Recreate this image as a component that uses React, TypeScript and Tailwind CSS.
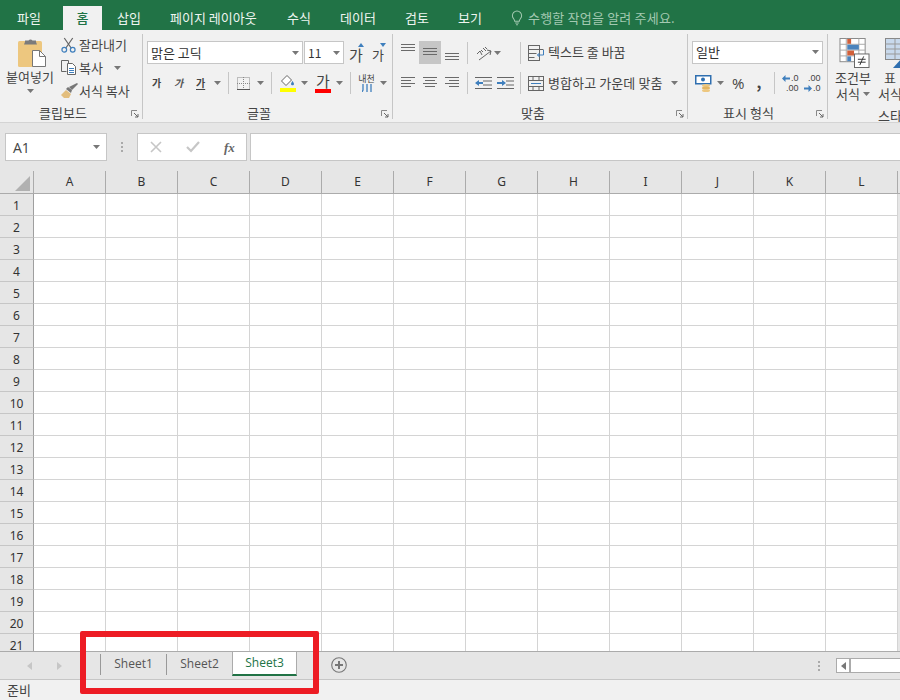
import React from "react";

const KR = "font-['Noto_Sans_CJK_KR','Noto_Sans',sans-serif]";
const tabs: [string, string][] = [
  ["파일", "w-[63px] pl-[17px]"],
  ["홈", "w-[39px]"],
  ["삽입", "w-[53px] pl-[15px]"],
  ["페이지 레이아웃", "w-[117px] pl-[15px]"],
  ["수식", "w-[53px] pl-[15px]"],
  ["데이터", "w-[65px] pl-[15px]"],
  ["검토", "w-[53px] pl-[15px]"],
  ["보기", "w-[53px] pl-[15px]"],
];
const cols = "ABCDEFGHIJKL".split("");
const rows = Array.from({ length: 21 }, (_, i) => i + 1);

function Caret({ className = "" }: { className?: string }) {
  return (
    <svg width="7" height="4" viewBox="0 0 7 4" className={`shrink-0 ${className}`}>
      <path d="M0 0h7L3.500 4z" fill="#777" />
    </svg>
  );
}
function Launcher() {
  return (
    <svg width="8" height="8" viewBox="0 0 8 8" className="shrink-0">
      <path d="M.5 6V.5H6" stroke="#888" fill="none" />
      <path d="M3 3l4 4M7 4v3H4" stroke="#666" fill="none" />
    </svg>
  );
}
function Sep({ className = "" }: { className?: string }) {
  return <div className={`w-px h-[22px] bg-[#c6c6c6] shrink-0 ${className}`} />;
}
function Group({ label, width, labelPl = "", children }: { label: string; width: string; labelPl?: string; children: React.ReactNode }) {
  return (
    <div className={`${width} shrink-0 h-[85px] border-r border-[#c6c6c6] flex flex-col relative`}>
      <div className="h-[72px]">{children}</div>
      <div className={`flex-1 flex items-center justify-center text-[13px] leading-none text-[#444] ${labelPl}`}>{label}</div>
      <div className="absolute right-[3px] bottom-[1px]">
        <Launcher />
      </div>
    </div>
  );
}
function Lines({ ws, h = 13 }: { ws: [number, number][]; h?: number }) {
  return (
    <svg width="14" height={h} viewBox={`0 0 14 ${h}`} className="block">
      {ws.map(([x, w], i) => (
        <rect key={i} x={x} y={i * 3} width={w} height="1" fill="#6a6a6a" />
      ))}
    </svg>
  );
}
function Combo({ text, w, size = "text-[13px]", cls = "" }: { text: string; w: string; size?: string; cls?: string }) {
  return (
    <div className={`${w} h-[23px] bg-white border border-[#c6c6c6] flex items-center justify-between pl-[3px] pr-[3px] ${size} text-[#333] shrink-0 ${cls}`}>
      <span className="leading-none">{text}</span>
      <Caret />
    </div>
  );
}
function Dots({ className = "" }: { className?: string }) {
  return (
    <div className={`flex flex-col gap-[2px] ${className}`}>
      <div className="w-[2px] h-[2px] bg-[#aaa]" />
      <div className="w-[2px] h-[2px] bg-[#aaa]" />
      <div className="w-[2px] h-[2px] bg-[#aaa]" />
    </div>
  );
}
function Arrow({ flip = false }: { flip?: boolean }) {
  return (
    <svg width="8" height="7" viewBox="0 0 8 7" className="shrink-0" style={flip ? { transform: "scaleX(-1)" } : undefined}>
      <path d="M0 3.500L3.500 0v2.500H8v2H3.500V7z" fill="#3f7fbd" />
    </svg>
  );
}

export default function App() {
  return (
    <div className={`relative w-[900px] h-[700px] overflow-hidden flex flex-col bg-[#e6e6e6] ${KR}`}>
      {/* Title tabs */}
      <div className="h-[30px] bg-[#217346] flex items-end shrink-0 text-[13px] text-white">
        {tabs.map(([t, c], i) =>
          i === 1 ? (
            <div key={t} className={`${c} h-[24px] bg-[#f1f1f1] text-[#217346] flex items-center justify-center font-medium`}>{t}</div>
          ) : (
            <div key={t} className={`${c} h-[24px] flex items-center whitespace-nowrap text-[#eef5f0]`}>{t}</div>
          )
        )}
        <div className="h-[24px] flex items-center gap-[5px] text-[#a3c9b1] ml-[15px]">
          <svg width="12" height="16" viewBox="0 0 13 16" fill="none" stroke="#a3c9b1" strokeWidth="1.100">
            <path d="M4 11.500C4 9 1.500 8.500 1.500 5.500a5 5 0 0 1 10 0C11.500 8.500 9 9 9 11.500z" />
            <path d="M4.500 13.500h4M5.500 15.300h2" />
          </svg>
          <span className="tracking-[0.2px] whitespace-nowrap">수행할 작업을 알려 주세요.</span>
        </div>
      </div>

      {/* Ribbon */}
      <div className="h-[93px] bg-[#f1f1f1] border-b border-[#d4d4d4] flex shrink-0 pt-[4px] text-[#444] text-[13px] overflow-hidden">
        <Group label="클립보드" width="w-[143px]" labelPl="pr-[16px]">
          <div className="flex">
            <div className="w-[60px] flex flex-col items-center">
              <svg width="28" height="29" viewBox="0 0 28 29" className="ml-[4px] mt-[4px]">
                <rect x="0" y="3" width="24" height="26" rx="1.500" fill="#edc77f" />
                <path d="M7 4V2.500h3.500a2.500 2.500 0 0 1 4 0H18V4l1 2.500H6z" fill="#7b7b7b" />
                <path d="M14.500 12.500h7l6 6v10h-13z" fill="#fff" stroke="#777" />
                <path d="M21.500 12.500v6h6" fill="none" stroke="#777" />
              </svg>
              <span className="leading-none mt-[3px] whitespace-nowrap">붙여넣기</span>
              <Caret className="mt-[6px]" />
            </div>
            <div className="flex flex-col mt-[-1px]">
              {[
                ["잘라내기", "cut"],
                ["복사", "copy"],
                ["서식 복사", "brush"],
              ].map(([t, k]) => (
                <div key={t} className="h-[23px] flex items-center whitespace-nowrap">
                  <div className="w-[19px] shrink-0 pl-px">
                    {k === "cut" && (
                      <svg width="15" height="16" viewBox="0 0 16 17" fill="none" className="block">
                        <path d="M3.500 1l7.500 11M12.500 1L5 12" stroke="#666" strokeWidth="1.300" />
                        <circle cx="3.500" cy="13.500" r="2.500" stroke="#3f7fbd" strokeWidth="1.300" />
                        <circle cx="12.500" cy="13.500" r="2.500" stroke="#3f7fbd" strokeWidth="1.300" />
                      </svg>
                    )}
                    {k === "copy" && (
                      <svg width="16" height="15" viewBox="0 0 16 15" fill="none" stroke="#666" className="block">
                        <path d="M5.500 11.500h-5v-11h7v3" />
                        <path d="M6.500 3.500h5l3 3v8h-8z" fill="#fff" />
                        <path d="M8 8.500h5M8 10.500h5M8 12.500h5" stroke="#3f7fbd" />
                      </svg>
                    )}
                    {k === "brush" && (
                      <svg width="18" height="15" viewBox="0 0 18 15" className="block">
                        <path d="M0 12l5-5 5 4-2 4H3z" fill="#e3be7d" />
                        <path d="M5 6l2-2 4 3-1 3z" fill="#777" />
                        <path d="M8 4l8-4 1 1-6 6z" fill="#777" />
                      </svg>
                    )}
                  </div>
                  <span className="leading-none">{t}</span>
                  {k === "copy" && <Caret className="ml-[11px]" />}
                </div>
              ))}
            </div>
          </div>
        </Group>

        <Group label="글꼴" width="w-[250px]" labelPl="pr-[17px]">
          <div className="flex items-center pl-[4px] pt-[7px]">
            <Combo text="맑은 고딕" w="w-[156px]" />
            <Combo text="11" w="w-[40px]" size="text-[12px]" cls="ml-[1px]" />
            <div className="ml-[4px] w-[22px] relative text-[15px] leading-none pt-[3px] pl-px">
              가
              <svg width="6" height="4" viewBox="0 0 6 4" className="absolute left-[10px] top-[-1px]"><path d="M3 0l3 4H0z" fill="#3f7fbd" /></svg>
            </div>
            <div className="w-[22px] relative text-[13px] leading-none pt-[4px] pl-[2px]">
              가
              <svg width="6" height="4" viewBox="0 0 6 4" className="absolute left-[10px] top-[-1px]"><path d="M0 0h6L3 4z" fill="#3f7fbd" /></svg>
            </div>
          </div>
          <div className="flex items-center pl-[9px] mt-[7px] h-[24px] text-[10px] font-bold">
            <span className="w-[22px] leading-none">가</span>
            <span className="w-[22px] leading-none italic text-[#555]">가</span>
            <span className="w-[18px] leading-none underline underline-offset-2">가</span>
            <Caret />
            <Sep className="ml-[7px]" />
            <svg width="13" height="13" viewBox="0 0 13 13" className="ml-[8px]">
              <rect x=".5" y=".5" width="12" height="12" fill="none" stroke="#888" strokeDasharray="1 1" />
              <path d="M6.500 0v13M0 6.500h13" stroke="#888" strokeDasharray="1 1" />
              <path d="M0 12.500h13" stroke="#555" />
            </svg>
            <Caret className="ml-[7px]" />
            <Sep className="ml-[7px]" />
            <div className="ml-[8px] w-[16px] flex flex-col items-center">
              <svg width="16" height="12" viewBox="0 0 16 12">
                <path d="M7 .5L1.500 6 6 10.500 11.500 5z" fill="#fff" stroke="#666" />
                <path d="M12.500 6s-1.500 2-1.500 3 .7 1.300 1.500 1.300S14 10 14 9s-1.500-3-1.500-3z" fill="#3f7fbd" />
              </svg>
              <div className="w-[16px] h-[4px] bg-[#ffff00] mt-[1px]" />
            </div>
            <Caret className="ml-[5px]" />
            <div className="ml-[7px] w-[16px] flex flex-col items-center text-[15px] font-normal leading-none">
              <span className="h-[14px] leading-[14px]">가</span>
              <div className="w-[16px] h-[4px] bg-[#ff0000] mt-[1px]" />
            </div>
            <Caret className="ml-[5px]" />
            <Sep className="ml-[7px]" />
            <div className="ml-[8px] w-[15px] flex flex-col items-center leading-none font-normal text-[9px] whitespace-nowrap">
              <span>내천</span>
              <svg width="10" height="8" viewBox="0 0 10 8" className="mt-px">
                <path d="M1 0v6l-1 2M5 0v8M9 0v8" stroke="#3f7fbd" strokeWidth="1.300" fill="none" />
              </svg>
            </div>
            <Caret className="ml-[6px]" />
          </div>
        </Group>

        <Group label="맞춤" width="w-[295px]" labelPl="pr-[14px]">
          <div className="flex items-center pl-[8px] pt-[7px] h-[30px]">
            <div className="w-[18px] self-start mt-[3px]"><Lines ws={[[0, 14], [0, 14], [0, 14]]} /></div>
            <div className="w-[22px] h-[23px] bg-[#c6c6c6] flex justify-center pt-[7px]"><Lines ws={[[0, 14], [0, 14], [0, 14]]} /></div>
            <div className="w-[22px] self-start mt-[12px] flex justify-center"><Lines ws={[[0, 14], [0, 14], [0, 14]]} /></div>
            <Sep className="ml-[4px]" />
            <svg width="17" height="16" viewBox="0 0 17 16" className="ml-[8px]" fill="none" stroke="#666">
              <path d="M1 9l3-3 2 4M5 5l2 2M7 3l3 3M9 2l2 2M3 15L15 6M11 5l4 1-1 4" />
            </svg>
            <Caret className="ml-[1px]" />
            <Sep className="ml-[19px]" />
            <svg width="17" height="16" viewBox="0 0 17 16" className="ml-[7px]" fill="none" stroke="#666">
              <rect x=".5" y=".5" width="11" height="15" />
              <path d="M.5 4.500h15M.5 8.500h8M.5 12.500h6" />
              <path d="M15.500 5v5h-6M11.500 8l-2 2 2 2" stroke="#3f7fbd" />
            </svg>
            <span className="ml-[3px] leading-none whitespace-nowrap pb-[2px]">텍스트 줄 바꿈</span>
          </div>
          <div className="flex items-center pl-[8px] mt-[7px] h-[24px]">
            <div className="w-[22px]"><Lines ws={[[0, 14], [0, 10], [0, 14], [0, 10]]} /></div>
            <div className="w-[22px]"><Lines ws={[[0, 14], [2, 10], [0, 14], [2, 10]]} /></div>
            <div className="w-[18px]"><Lines ws={[[0, 14], [4, 10], [0, 14], [4, 10]]} /></div>
            <Sep className="ml-[4px]" />
            <svg width="17" height="12" viewBox="0 0 17 12" className="ml-[7px]">
              <path d="M0 .5h17M8 4h9M8 8h9M0 11.500h17" stroke="#666" />
              <path d="M0 6l4-3v2h4v2H4v2z" fill="#3f7fbd" />
            </svg>
            <svg width="17" height="12" viewBox="0 0 17 12" className="ml-[5px]">
              <path d="M0 .5h17M9 4h8M9 8h8M0 11.500h17" stroke="#666" />
              <path d="M9 6L5 3v2H0v2h5v2z" fill="#3f7fbd" />
            </svg>
            <Sep className="ml-[6px]" />
            <svg width="16" height="15" viewBox="0 0 16 15" className="ml-[7px]" fill="none" stroke="#666">
              <rect x=".5" y=".5" width="15" height="14" />
              <path d="M.5 4.500h15M.5 10.500h15M5 .5v4M11 .5v4M5 10.500v4M11 10.500v4" />
              <path d="M3 7.500h10" stroke="#3f7fbd" />
            </svg>
            <span className="ml-[4px] leading-none whitespace-nowrap tracking-[0.1px] pb-[2px]">병합하고 가운데 맞춤</span>
            <Caret className="ml-[8px]" />
          </div>
        </Group>

        <Group label="표시 형식" width="w-[140px]" labelPl="pr-[18px]">
          <div className="pl-[4px] pt-[7px]">
            <Combo text="일반" w="w-[131px]" cls="pb-[2px]" />
          </div>
          <div className="flex items-center pl-[7px] mt-[7px] h-[24px]">
            <svg width="17" height="17" viewBox="0 0 17 17">
              <rect x=".75" y=".75" width="15" height="8" fill="#fff" stroke="#2f6fb0" strokeWidth="1.500" />
              <circle cx="8" cy="4.500" r="2" fill="#2f6fb0" />
              <ellipse cx="11" cy="10.500" rx="4" ry="1.500" fill="#edc77f" />
              <ellipse cx="11" cy="13" rx="4" ry="1.500" fill="#e3b563" />
              <ellipse cx="11" cy="15.500" rx="4" ry="1.500" fill="#edc77f" />
            </svg>
            <Caret className="ml-[5px]" />
            <span className="ml-[8px] text-[15px] leading-none font-['Open_Sans']">%</span>
            <span className="ml-[12px] text-[15px] leading-none font-bold w-[4px] mt-[-4px]">,</span>
            <Sep className="ml-[14px]" />
            <div className="ml-[7px] w-[16px] text-[9px] leading-[8px] text-[#444] flex flex-col items-end font-['Liberation_Sans']">
              <span className="flex items-center gap-px"><Arrow />.0</span>
              <span className="mt-[2px]">.00</span>
            </div>
            <div className="ml-[6px] w-[16px] text-[9px] leading-[8px] text-[#444] flex flex-col items-end font-['Liberation_Sans']">
              <span>.00</span>
              <span className="flex items-center gap-px mt-[2px]"><Arrow flip />.0</span>
            </div>
          </div>
        </Group>

        <div className="flex pl-[7px] gap-px shrink-0">
          <div className="w-[36px] flex flex-col items-center">
            <svg width="31" height="30" viewBox="0 0 31 31" className="mt-[4px] ml-[2px]">
              <rect x=".5" y=".5" width="26" height="24" fill="#fff" stroke="#888" />
              <path d="M7 .5v24M20 .5v24M.5 6.500h26M.5 12.500h26M.5 18.500h26" stroke="#aaa" />
              <rect x="8" y="1" width="4" height="5" fill="#d2603a" />
              <rect x="8" y="7" width="12" height="5" fill="#4a83bd" />
              <rect x="8" y="13" width="7" height="5" fill="#d2603a" />
              <rect x="8" y="19" width="4" height="5" fill="#4a83bd" />
              <rect x="15.500" y="16.500" width="15" height="14" fill="#fff" stroke="#666" />
              <path d="M19 22h8M19 25h8M25 19l-4 9" stroke="#333" fill="none" />
            </svg>
            <span className="leading-none mt-[3px] whitespace-nowrap">조건부</span>
            <span className="leading-none mt-[3px] whitespace-nowrap flex items-center gap-[3px]">서식<Caret /></span>
          </div>
          <div className="w-[36px] flex flex-col items-center shrink-0">
            <svg width="31" height="30" viewBox="0 0 31 30" className="mt-[4px] ml-[20px] shrink-0">
              <rect x=".5" y=".5" width="30" height="21" fill="#c8d9ec" stroke="#888" />
              <path d="M10 .5v21M20 .5v21M.5 6h30M.5 11h30M.5 16h30" stroke="#999" />
              <path d="M8 30l9-10h8l-6 10z" fill="#2f6fb0" />
            </svg>
            <span className="leading-none mt-[3px] whitespace-nowrap">표</span>
            <span className="leading-none mt-[3px] whitespace-nowrap">서식</span>
            <span className="leading-none mt-[9px] whitespace-nowrap ml-[4px] w-[28px] overflow-hidden">스타</span>
          </div>
        </div>
      </div>

      {/* Formula bar */}
      <div className="h-[48px] flex items-start pt-[10px] pl-[5px] shrink-0">
        <div className="w-[102px] h-[28px] bg-white border border-[#c6c6c6] flex items-center justify-between pl-[7px] pr-[6px] text-[14px] text-[#444] font-['Open_Sans']">
          <span>A1</span>
          <Caret />
        </div>
        <div className="w-[30px] h-[28px] flex items-center justify-center">
          <Dots />
        </div>
        <div className="w-[110px] h-[28px] bg-white border border-[#c6c6c6] flex items-center">
          <svg width="12" height="12" viewBox="0 0 12 12" className="ml-[12px]" stroke="#c6c6c6" strokeWidth="1.600">
            <path d="M1 1l10 10M11 1L1 11" />
          </svg>
          <svg width="14" height="12" viewBox="0 0 14 12" className="ml-[24px]" fill="none" stroke="#c6c6c6" strokeWidth="2.200">
            <path d="M1 6l4 4 8-9" />
          </svg>
          <span className="ml-[24px] italic font-bold text-[13px] text-[#666] font-['Liberation_Serif'] leading-none">fx</span>
        </div>
        <div className="ml-[3px] flex-1 h-[28px] bg-white border border-[#c6c6c6] border-r-0" />
      </div>

      {/* Sheet */}
      <div className="flex-1 min-h-0 overflow-hidden flex flex-col font-['Noto_Sans',sans-serif] text-[12px]">
        <div className="flex h-[23px] shrink-0 border-b border-[#ababab]">
          <div className="w-[34px] shrink-0 relative border-r border-[#ababab]">
            <svg width="15" height="15" viewBox="0 0 15 15" className="absolute right-[3px] bottom-[2px]">
              <path d="M15 0v15H0z" fill="#b1b1b1" />
            </svg>
          </div>
          {cols.map((c) => (
            <div key={c} className="w-[72px] shrink-0 flex items-center justify-center border-r border-[#ababab] text-[#333]">{c}</div>
          ))}
        </div>
        {rows.map((r) => (
          <div key={r} className="flex h-[22px] shrink-0">
            <div className="w-[34px] shrink-0 flex items-center justify-center border-r border-b border-r-[#9f9f9f] border-b-[#c6c6c6] text-[#333] pt-[3px]">{r}</div>
            {cols.map((c) => (
              <div key={c} className="w-[72px] shrink-0 bg-white border-r border-b border-[#d4d4d4]" />
            ))}
          </div>
        ))}
      </div>

      {/* Sheet tabs */}
      <div className="h-[29px] shrink-0 border-t border-[#ababab] border-b border-b-[#c6c6c6] bg-[#e6e6e6] flex items-start font-['Open_Sans',sans-serif] text-[12px] text-[#555]">
        <div className="w-[100px] h-[27px] flex items-center pl-[27px] gap-[25px] shrink-0">
          <span className="w-0 h-0 border-y-[4px] border-y-transparent border-r-[5px] border-r-[#c6c6c6]" />
          <span className="w-0 h-0 border-y-[4px] border-y-transparent border-l-[5px] border-l-[#c6c6c6]" />
        </div>
        <div className="flex h-[24px] items-center shrink-0">
          <div className="h-[21px] w-[66px] border-l border-[#999] flex items-center justify-center">Sheet1</div>
          <div className="h-[21px] w-[66px] border-l border-[#999] flex items-center justify-center">Sheet2</div>
          <div className="h-[24px] w-[65px] bg-white border-x border-[#ababab] border-b-2 border-b-[#217346] text-[#217346] flex items-center justify-center">Sheet3</div>
        </div>
        <svg width="16" height="16" viewBox="0 0 16 16" className="ml-[34px] mt-[5px] shrink-0" fill="none" stroke="#777">
          <circle cx="8" cy="8" r="7.300" strokeWidth="1.100" />
          <path d="M8 4v8M4 8h8" strokeWidth="2" />
        </svg>
        <div className="ml-auto flex items-center h-[27px] shrink-0">
          <Dots className="mr-[16px]" />
          <div className="w-[15px] h-[15px] bg-white border border-[#ababab] border-r-[2px] flex items-center justify-center">
            <span className="w-0 h-0 border-y-[4px] border-y-transparent border-r-[5px] border-r-[#777]" />
          </div>
          <div className="w-[49px] h-[15px] bg-white border-y border-[#ababab]" />
        </div>
      </div>

      {/* Status */}
      <div className="h-[20px] shrink-0 bg-[#f1f1f1] flex items-center pl-[7px] text-[13px] text-[#444]">준비</div>

      {/* Annotation */}
      <div className="absolute left-[80px] top-[631px] w-[239px] h-[63px] border-[6px] border-[#ed1c24] rounded-[2px]" />
    </div>
  );
}
